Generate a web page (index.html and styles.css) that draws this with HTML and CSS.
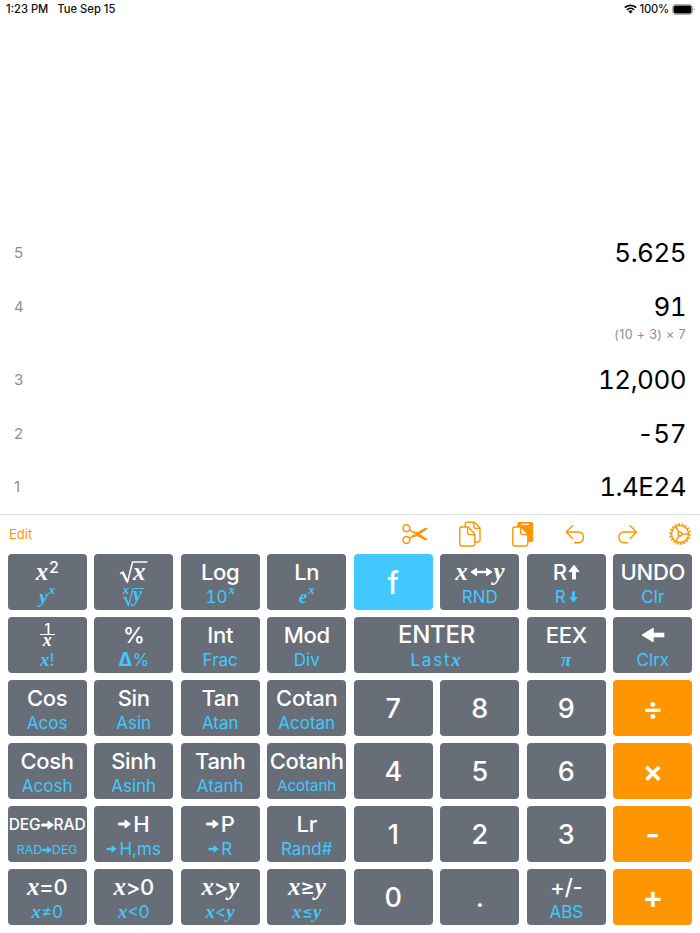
FILE: index.html
```
<!DOCTYPE html>
<html lang="en">

<head>
    <meta charset="UTF-8">
    <meta name="viewport" content="width=device-width, initial-scale=1.0">
    <title>RPN Calculator</title>
    <link rel="stylesheet" href="styles.css">
</head>

<body>
    <!-- shared arrow shapes -->
    <svg class="defs">
        <symbol id="arrow-right" viewBox="0 0 13 10">
            <path d="M1.5 5H8" stroke="currentColor" stroke-width="3" stroke-linecap="round"/>
            <path d="M7 1L12.4 5L7 9Z" fill="currentColor" stroke="currentColor" stroke-linejoin="round"/>
        </symbol>
        <symbol id="arrow-up" viewBox="0 0 12 16">
            <path d="M6 15.5V7" stroke="currentColor" stroke-width="3.8"/>
            <path d="M6 1.2L11 7.6H1Z" fill="currentColor" stroke="currentColor" stroke-linejoin="round"/>
        </symbol>
    </svg>

    <div class="screen">
        <div class="status">
            <span class="time">1:23 PM</span>
            <span class="date">Tue Sep 15</span>
            <svg class="wifi" viewBox="0 0 13 10" fill="none" stroke="#000" stroke-width="1.7">
                <path d="M.8 3.6A8.3 8.3 0 0 1 12.2 3.6"/>
                <path d="M2.9 5.9A5.2 5.2 0 0 1 10.1 5.9"/>
                <path d="M6.5 9.5L4.4 7.4A3 3 0 0 1 8.6 7.4Z" fill="#000" stroke="none"/>
            </svg>
            <span class="percent">100%</span>
            <svg class="battery" viewBox="0 0 23 11">
                <rect x=".5" y=".5" width="20" height="10" rx="2.8" fill="#fff" stroke="#aaa"/>
                <rect x="1.5" y="1.5" width="18" height="8" rx="1.8" fill="#000"/>
                <path d="M21.6 3.8V7.2Q22.7 6.6 22.7 5.5T21.6 3.8" fill="#aaa"/>
            </svg>
        </div>

        <ul class="stack">
            <li><span class="level">5</span><span class="value">5.625</span></li>
            <li class="with-expr"><span class="level">4</span><span class="value">91</span><span class="expr">(10 + 3) × 7</span></li>
            <li><span class="level">3</span><span class="value">12,000</span></li>
            <li><span class="level">2</span><span class="value">-57</span></li>
            <li><span class="level">1</span><span class="value">1.4E24</span></li>
        </ul>

        <div class="toolbar">
            <span class="edit">Edit</span>
            <div class="tools">
                <svg width="26" height="26" viewBox="0 0 26 26" fill="none" stroke="currentColor" stroke-width="1.5">
                    <circle cx="4.4" cy="7.2" r="3.4"/>
                    <circle cx="4.4" cy="19" r="3.4"/>
                    <path d="M7.4 8.9L14 12.6M7.4 17.3L14 13.4"/>
                    <path d="M10.5 14.2L22.4 7.2Q24.6 6.2 25.8 7.7L14.8 15.2L10.8 16.4Z" fill="currentColor" stroke="none"/>
                    <path d="M12.3 10.6L14.8 11L25.8 18.3Q24.6 19.9 22.4 18.9L12 13.5Z" fill="currentColor" stroke="none"/>
                    <circle cx="13.2" cy="13.2" r=".7" fill="#fff" stroke="none"/>
                </svg>
                <svg width="22" height="26" viewBox="0 0 22 26" fill="none" stroke="currentColor" stroke-width="1.4" stroke-linejoin="round">
                    <path d="M6.2 6V3.2Q6.2 1.3 8 1.3H15.6L21 7V19.3Q21 21 19.2 21H16"/>
                    <path d="M14.8 1.3V5.3Q14.8 7.4 17 7.4H21"/>
                    <path d="M2.6 6H9.3L15.8 13V23.3Q15.8 25 14 25H2.6Q.8 25 .8 23.3V7.8Q.8 6 2.6 6Z"/>
                    <path d="M8.6 6V11.5Q8.6 13.6 10.8 13.6H15.8"/>
                </svg>
                <svg width="22" height="26" viewBox="0 0 22 26" fill="none" stroke="currentColor" stroke-width="1.4" stroke-linejoin="round">
                    <rect x="5.3" y="1" width="15.9" height="20" rx="2" fill="currentColor" stroke="none"/>
                    <path d="M10.3 3.4H16.3" stroke="#fff" stroke-width="1.2" stroke-linecap="round"/>
                    <path d="M2.6 6H9.3L15.8 13V23.3Q15.8 25 14 25H2.6Q.8 25 .8 23.3V7.8Q.8 6 2.6 6Z" fill="#fff"/>
                    <path d="M8.6 6V11.5Q8.6 13.6 10.8 13.6H15.8"/>
                </svg>
                <svg width="20" height="26" viewBox="0 0 20 26" fill="none" stroke="currentColor" stroke-width="1.4" stroke-linecap="round" stroke-linejoin="round">
                    <path d="M7.5 4.8L1.2 11L7.5 17.4M1.4 11H13.8A5.4 5.4 0 0 1 13.8 21.7H9.8"/>
                </svg>
                <svg width="21" height="26" viewBox="0 0 21 26" fill="none" stroke="currentColor" stroke-width="1.4" stroke-linecap="round" stroke-linejoin="round">
                    <path d="M13.2 4.8L19.5 11L13.2 17.4M19.3 11H6.6A5.4 5.4 0 0 0 6.6 21.7H10.6"/>
                </svg>
                <svg width="22" height="26" viewBox="0 0 22 26" fill="none" stroke="currentColor">
                    <circle cx="11" cy="13" r="8.5" stroke-width="1.5"/>
                    <circle cx="11" cy="13" r="9.9" stroke-width="1.8" pathLength="36" stroke-dasharray="1 1"/>
                    <circle cx="11" cy="13" r="2" stroke-width="1.4"/>
                    <path d="M13 13H19.4M10 11.3L6.8 5.7M10 14.7L6.8 20.3" stroke-width="1.4"/>
                </svg>
            </div>
        </div>

        <div class="keys">
            <div class="key"><span class="main"><i>x</i><sup>2</sup></span><span class="alt"><i>y</i><sup><i>x</i></sup></span></div>
            <div class="key">
                <span class="main">
                    <svg class="root" width="30" height="26" viewBox="0 0 30 26">
                        <path d="M1 14.7L4 13.1L8.6 22.5L13.6 3.1H28.5" fill="none" stroke="currentColor" stroke-width="1.5"/>
                        <path d="M3.6 13.5L8.3 22.8" stroke="currentColor" stroke-width="2.4"/>
                        <text x="14" y="20.5" font-size="25">x</text>
                    </svg>
                </span>
                <span class="alt">
                    <svg class="root" width="24" height="22" viewBox="0 0 24 22">
                        <path d="M1 12.2L3.4 11L6.6 19L11 2.5H22" fill="none" stroke="currentColor" stroke-width="1.2"/>
                        <path d="M3 11.4L6.4 19.4" stroke="currentColor" stroke-width="1.8"/>
                        <text x=".8" y="8" font-size="13">x</text>
                        <text x="11" y="15.3" font-size="20">y</text>
                    </svg>
                </span>
            </div>
            <div class="key"><span class="main">Log</span><span class="alt tens">10<sup><i>x</i></sup></span></div>
            <div class="key"><span class="main">Ln</span><span class="alt"><i>e</i><sup><i>x</i></sup></span></div>
            <div class="key shift"><span class="single">f</span></div>
            <div class="key">
                <span class="main"><i>x</i><svg class="swap" width="23" height="10" viewBox="0 0 23 10"><path d="M5 5H18" stroke="currentColor" stroke-width="2.4"/><path d="M6.5 1.3L1 5L6.5 8.7ZM16.5 1.3L22 5L16.5 8.7Z" fill="currentColor" stroke="currentColor" stroke-linejoin="round"/></svg><i>y</i></span>
                <span class="alt">RND</span>
            </div>
            <div class="key"><span class="main">R<svg class="up" width="12" height="16"><use href="#arrow-up"/></svg></span><span class="alt">R<svg class="down" width="9" height="12"><use href="#arrow-up"/></svg></span></div>
            <div class="key"><span class="main">UNDO</span><span class="alt">Clr</span></div>

            <div class="key">
                <span class="main"><span class="fraction"><span>1</span><i>x</i></span></span>
                <span class="alt"><i>x</i>!</span>
            </div>
            <div class="key"><span class="main">%</span><span class="alt"><b>Δ</b>%</span></div>
            <div class="key"><span class="main">Int</span><span class="alt">Frac</span></div>
            <div class="key"><span class="main">Mod</span><span class="alt">Div</span></div>
            <div class="key enter"><span class="main">ENTER</span><span class="alt">Last<i>x</i></span></div>
            <div class="key"><span class="main">EEX</span><span class="alt"><i>π</i></span></div>
            <div class="key">
                <span class="main"><svg width="24" height="16" viewBox="0 0 24 16"><path d="M10 8H23.3" stroke="currentColor" stroke-width="4.6"/><path d="M1 8L12.2 1.2V14.8Z" fill="currentColor" stroke="currentColor" stroke-linejoin="round"/></svg></span>
                <span class="alt">Clrx</span>
            </div>

            <div class="key"><span class="main">Cos</span><span class="alt">Acos</span></div>
            <div class="key"><span class="main">Sin</span><span class="alt">Asin</span></div>
            <div class="key"><span class="main">Tan</span><span class="alt">Atan</span></div>
            <div class="key"><span class="main">Cotan</span><span class="alt">Acotan</span></div>
            <div class="key"><span class="single">7</span></div>
            <div class="key"><span class="single">8</span></div>
            <div class="key"><span class="single">9</span></div>
            <div class="key op"><span class="single">÷</span></div>

            <div class="key"><span class="main">Cosh</span><span class="alt">Acosh</span></div>
            <div class="key"><span class="main">Sinh</span><span class="alt">Asinh</span></div>
            <div class="key"><span class="main">Tanh</span><span class="alt">Atanh</span></div>
            <div class="key"><span class="main">Cotanh</span><span class="alt small">Acotanh</span></div>
            <div class="key"><span class="single">4</span></div>
            <div class="key"><span class="single">5</span></div>
            <div class="key"><span class="single">6</span></div>
            <div class="key op"><span class="single">×</span></div>

            <div class="key convert">
                <span class="main">DEG<svg width="13" height="10"><use href="#arrow-right"/></svg>RAD</span>
                <span class="alt">RAD<svg width="10" height="8"><use href="#arrow-right"/></svg>DEG</span>
            </div>
            <div class="key to"><span class="main"><svg width="13" height="10"><use href="#arrow-right"/></svg>H</span><span class="alt"><svg width="11" height="8"><use href="#arrow-right"/></svg>H,ms</span></div>
            <div class="key to"><span class="main"><svg width="13" height="10"><use href="#arrow-right"/></svg>P</span><span class="alt"><svg width="11" height="8"><use href="#arrow-right"/></svg>R</span></div>
            <div class="key"><span class="main">Lr</span><span class="alt">Rand#</span></div>
            <div class="key"><span class="single">1</span></div>
            <div class="key"><span class="single">2</span></div>
            <div class="key"><span class="single">3</span></div>
            <div class="key op"><span class="single">-</span></div>

            <div class="key"><span class="main"><i>x</i>=0</span><span class="alt"><i>x</i>≠0</span></div>
            <div class="key"><span class="main"><i>x</i>&gt;0</span><span class="alt"><i>x</i>&lt;0</span></div>
            <div class="key"><span class="main"><i>x</i>&gt;<i>y</i></span><span class="alt"><i>x</i>&lt;<i>y</i></span></div>
            <div class="key"><span class="main"><i>x</i>≥<i>y</i></span><span class="alt"><i>x</i>≤<i>y</i></span></div>
            <div class="key"><span class="single">0</span></div>
            <div class="key"><span class="single">.</span></div>
            <div class="key"><span class="main">+/-</span><span class="alt">ABS</span></div>
            <div class="key op"><span class="single">+</span></div>
        </div>
    </div>
</body>

</html>
```
FILE: styles.css
```
*{
    margin: 0;
    padding: 0;
    box-sizing: border-box;
}
body{
    background-color: #fff;
    font-family: Inter, "Liberation Sans", sans-serif;
}
.defs{
    display: none;
}
.screen{
    width: 700px;
    height: 933px;
    display: flex;
    flex-direction: column;
    overflow: hidden;
}

/* status bar */
.status{
    height: 20px;
    padding: 0 5px 2px 6px;
    display: flex;
    align-items: center;
    font-size: 11.2px;
    font-weight: 500;
    color: #111;
}
.date{
    margin-left: 9px;
    margin-right: auto;
}
.wifi{
    width: 13px;
    height: 10px;
    margin-right: 3px;
}
.percent{
    margin-right: 3px;
    letter-spacing: -.2px;
}
.battery{
    width: 23px;
    height: 11px;
}

/* stack */
.stack{
    flex: 1;
    display: flex;
    flex-direction: column;
    justify-content: flex-end;
    list-style: none;
    border-bottom: 1px solid #dcdcde;
}
.stack li{
    display: grid;
    grid-template-columns: 1fr auto;
    align-items: center;
    height: 53.6px;
    padding: 0 14px;
}
.level{
    padding-bottom: 1px;
    font-size: 15px;
    color: #8e8e93;
}
.value{
    font-size: 26px;
    line-height: 34px;
    letter-spacing: -.55px;
    font-variant-numeric: tabular-nums;
    text-align: right;
    color: #000;
}
.stack .with-expr{
    height: 73px;
    grid-template-rows: 34px 20px;
    align-content: start;
    padding-top: 10px;
}
.expr{
    grid-column: 1 / 3;
    font-size: 12.5px;
    letter-spacing: .35px;
    text-align: right;
    color: #8e8e93;
}

/* toolbar */
.toolbar{
    height: 39px;
    padding: 0 9px 2px;
    display: flex;
    align-items: center;
    justify-content: space-between;
    color: #ff9500;
}
.edit{
    font-size: 13px;
}
.tools{
    display: flex;
    gap: 31.3px;
}

/* keypad */
.keys{
    height: 379px;
    padding: 0 7.6px;
    display: grid;
    grid-template-columns: repeat(8, 1fr);
    grid-auto-rows: 55.8px;
    gap: 7.3px 7.4px;
}
.key{
    display: flex;
    flex-direction: column;
    align-items: center;
    padding-top: 4px;
    border-radius: 4px;
    background-color: #686e78;
    color: #fff;
    white-space: nowrap;
    min-width: 0;
}
.enter{
    grid-column: span 2;
}
.main, .alt{
    display: flex;
    align-items: center;
    justify-content: center;
}
.main{
    height: 28px;
    font-size: 22px;
    line-height: 28px;
    font-weight: 450;
    letter-spacing: -.3px;
}
.alt{
    height: 22px;
    font-size: 17px;
    line-height: 22px;
    color: #40c8ff;
}
.single{
    margin: auto;
    padding-bottom: 2px;
    font-size: 27px;
    line-height: 34px;
    font-weight: 500;
}
.key i, .root{
    font-family: "Liberation Serif", serif;
    font-style: italic;
    font-weight: bold;
}
.main i{
    font-size: 25px;
}
.alt i{
    font-size: 19px;
}
.main sup{
    font-size: 16px;
    line-height: 14px;
    margin: -11px 0 0 1px;
}
.alt sup{
    line-height: 12px;
    margin: -14px 0 0 1px;
}
.alt sup i{
    display: block;
    font-size: 13px;
    line-height: 12px;
}
.tens{
    font-variant-numeric: tabular-nums;
}
.root{
    overflow: visible;
}
.root text{
    fill: currentColor;
}
.fraction{
    display: flex;
    flex-direction: column;
    align-items: center;
    width: 15px;
    font-size: 14px;
}
.fraction span{
    width: 100%;
    height: 13px;
    line-height: 13px;
    text-align: center;
    border-bottom: 1.5px solid #fff;
}
.fraction i{
    height: 13px;
    margin-bottom: 1px;
    font-size: 18px;
    line-height: 10px;
}
.swap{
    margin: 0 0 0 3px;
}
.up{
    margin-left: 1px;
}
.down{
    margin-left: 3px;
    transform: rotate(180deg);
}
.enter .main{
    font-size: 24px;
}
.enter .alt{
    letter-spacing: 1.8px;
}
.alt b{
    font-size: 19px;
}
.alt.small{
    font-size: 15px;
}
.convert .main{
    font-size: 15.5px;
    letter-spacing: -.1px;
    padding-top: 1px;
}
.convert .alt{
    font-size: 12.3px;
    padding-top: 1px;
}
.to svg{
    margin-right: 2px;
}
.shift{
    background-color: #40c8ff;
}
.shift .single{
    font-size: 30px;
}
.op{
    background-color: #ff9500;
}
.op .single{
    padding-bottom: 5px;
    font-size: 31px;
    font-weight: 600;
}
```
